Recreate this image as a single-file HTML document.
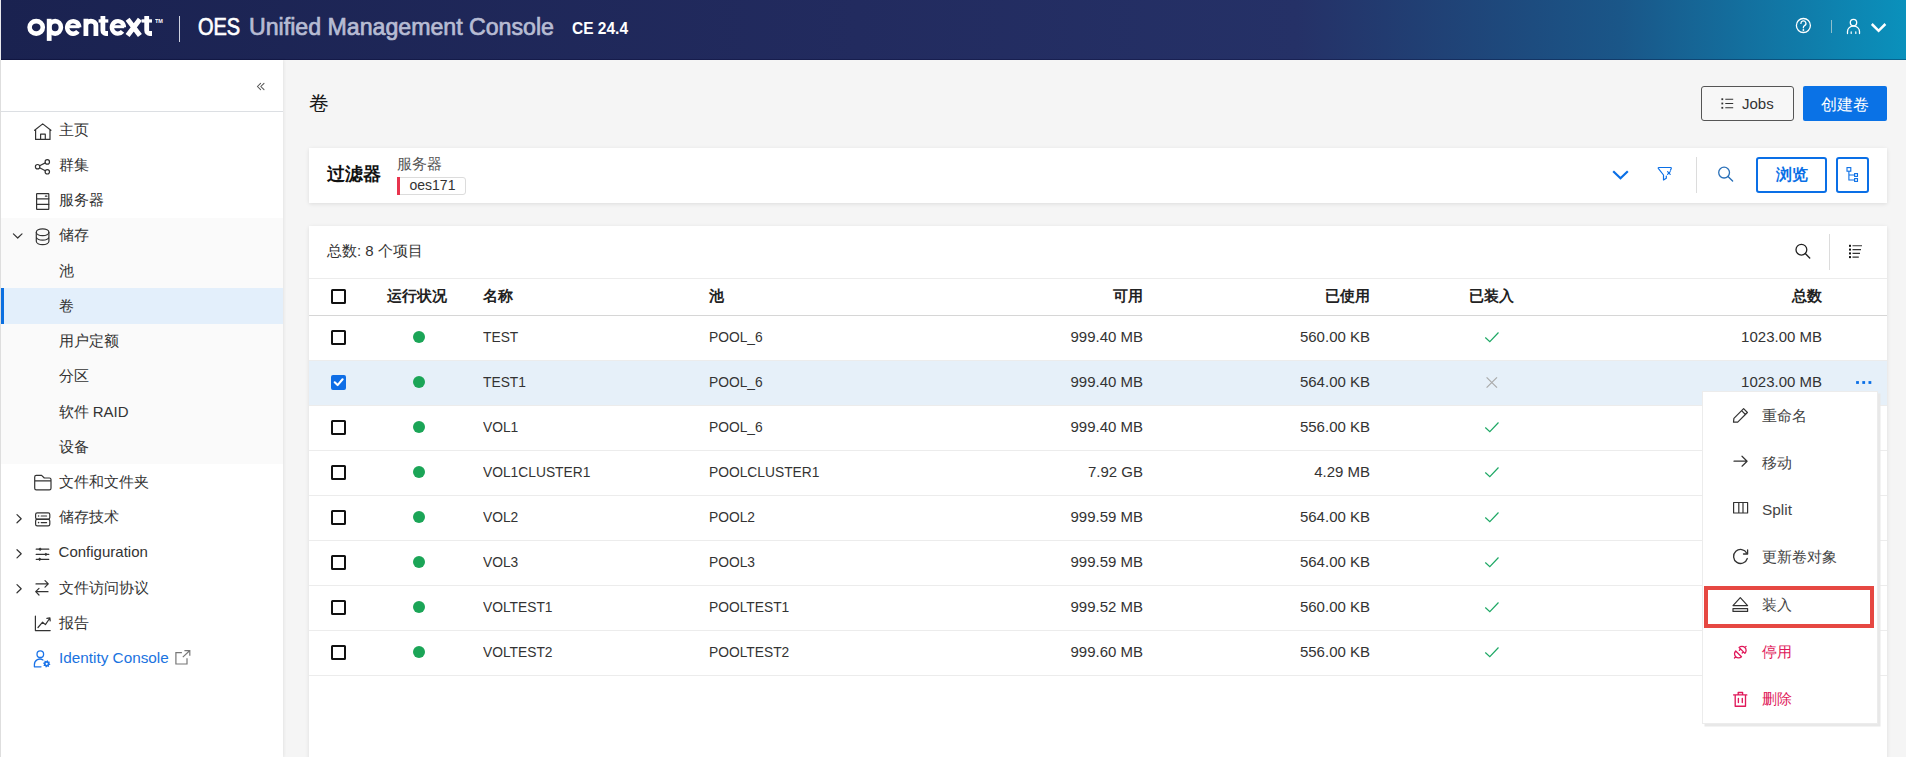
<!DOCTYPE html><html><head><meta charset="utf-8"><style>
*{box-sizing:border-box;margin:0;padding:0}
html,body{width:1906px;height:757px;overflow:hidden}
body{position:relative;background:#f5f5f5;font-family:"Liberation Sans",sans-serif;color:#333;}
.a{position:absolute}
.t{position:absolute;white-space:nowrap;line-height:1;transform-origin:0 0}
.tr{position:absolute;white-space:nowrap;line-height:1;text-align:right;transform-origin:100% 0}
svg.ov{position:absolute;left:0;top:0;width:1906px;height:757px;overflow:visible}
#hdr{left:0;top:0;width:1906px;height:60px;background:linear-gradient(90deg,#1a2250 0%,#222b5f 45%,#253167 68%,#1a5688 85%,#0a91bc 100%)}
#hdrb{left:0;top:59px;width:1906px;height:1px;background:rgba(0,0,40,.3)}
.nav{position:absolute;left:58.6px;font-size:15px;color:#333;line-height:1;white-space:nowrap}
.card{position:absolute;background:#fff;box-shadow:0 1px 4px rgba(0,0,0,.10)}
.cb{position:absolute;width:15px;height:15px;border:2px solid #111;border-radius:1.5px;left:331px}
.dot{position:absolute;width:12px;height:12px;border-radius:50%;background:#1ba557;left:413px}
.c{position:absolute;font-size:15px;color:#333;line-height:1;white-space:nowrap;transform-origin:0 0}
.cr{position:absolute;font-size:15px;color:#333;line-height:1;white-space:nowrap;text-align:right;width:200px}
.hd{position:absolute;font-size:15px;font-weight:bold;color:#222;line-height:1;white-space:nowrap}
.ln{position:absolute;left:309px;width:1578px;height:1px;background:#ececec}
.mi{position:absolute;left:1762px;font-size:15.4px;color:#444;line-height:1;white-space:nowrap}
</style></head><body>
<div id="hdr" class="a"></div><div id="hdrb" class="a"></div>
<div class="a" style="left:0;top:0;width:1px;height:60px;background:#e9e9ee"></div>
<svg class="ov" viewBox="0 0 1906 757" style="z-index:2"><g fill="none" stroke="#fff" stroke-width="4.6">
<ellipse cx="36.2" cy="27.35" rx="6.6" ry="6.25"/>
<path d="M49.2,18.8 V40.9" stroke-width="4.8"/>
<ellipse cx="55.1" cy="27.35" rx="5.8" ry="6.25"/>
<path d="M66.5,26.7 H79.5" stroke-width="3"/>
<path d="M79.25,27.35 A6.05,6.25 0 1 0 77.9,31.4" stroke-width="4.4"/>
<path d="M85.9,35.9 V18.8 M85.9,25.2 A5,4.1 0 0 1 95.9,25.2 V35.9" stroke-width="4.8"/>
<path d="M102.9,16 V30.5 A3,3 0 0 0 105.9,33.5 H108" stroke-width="4.8"/>
<path d="M98.6,20.95 H108.3" stroke-width="3.3"/>
<path d="M111.7,26.7 H124.2" stroke-width="3"/>
<path d="M123.9,27.35 A6.0,6.25 0 1 0 122.5,31.4" stroke-width="4.4"/>
<path d="M127.6,19.2 L139.9,35.6 M139.9,19.2 L127.6,35.6" stroke-width="5"/>
<path d="M146.7,16 V30.5 A3,3 0 0 0 149.7,33.5 H152" stroke-width="4.8"/>
<path d="M141.6,20.95 H152" stroke-width="3.3"/>
</g></svg>
<div class="t" style="left:155px;top:18.6px;font-size:5px;font-weight:bold;color:#fff;transform:scaleX(1.1)">TM</div>
<div class="a" style="left:179px;top:16px;width:1px;height:26px;background:#cfd2e0"></div>
<div class="t" style="left:198px;top:16px;font-size:23.5px;color:#fff;transform:scaleX(0.85);-webkit-text-stroke:0.7px #fff">OES</div>
<div class="t" style="left:249.3px;top:16px;font-size:23.5px;color:#b7bcd3;transform:scaleX(0.985);-webkit-text-stroke:0.7px #b7bcd3">Unified Management Console</div>
<div class="t" style="left:572px;top:19.5px;font-size:16.5px;font-weight:bold;color:#fff;transform:scaleX(0.94)">CE 24.4</div>
<div class="a" style="left:1831px;top:20px;width:1px;height:13px;background:#8fbfcc"></div>
<div class="a" style="left:0;top:60px;width:283px;height:697px;background:#fff;border-left:1px solid #dedede;box-shadow:1px 0 3px rgba(0,0,0,.07)"></div>
<div class="a" style="left:1px;top:111px;width:282px;height:1px;background:#dcdfe3"></div>
<div class="a" style="left:1px;top:218px;width:282px;height:246px;background:#fafafa"></div>
<div class="a" style="left:1px;top:288px;width:282px;height:36px;background:#e3effb"></div>
<div class="a" style="left:1px;top:288px;width:3px;height:36px;background:#0b6fe0"></div>
<div class="nav" style="top:121.80px">主页</div>
<div class="nav" style="top:157.02px">群集</div>
<div class="nav" style="top:192.24px">服务器</div>
<div class="nav" style="top:227.46px">储存</div>
<div class="nav" style="top:262.68px">池</div>
<div class="nav" style="top:297.90px">卷</div>
<div class="nav" style="top:333.12px">用户定额</div>
<div class="nav" style="top:368.34px">分区</div>
<div class="nav" style="top:403.56px">软件 RAID</div>
<div class="nav" style="top:438.78px">设备</div>
<div class="nav" style="top:474.00px">文件和文件夹</div>
<div class="nav" style="top:509.22px">储存技术</div>
<div class="nav" style="top:544.44px">Configuration</div>
<div class="nav" style="top:579.66px">文件访问协议</div>
<div class="nav" style="top:614.88px">报告</div>
<div class="nav" style="top:650.10px;color:#1a73e0;transform:scaleX(1.02);transform-origin:0 0">Identity Console</div>
<div class="t" style="left:309px;top:93px;font-size:20px;color:#1a1a1a">卷</div>
<div class="a" style="left:1701px;top:86px;width:93px;height:35px;border:1px solid #555;border-radius:3px;background:#f7f7f7"></div>
<div class="t" style="left:1742px;top:96px;font-size:15px;color:#333">Jobs</div>
<div class="a" style="left:1803px;top:86px;width:84px;height:35px;border-radius:2px;background:#0a72e6"></div>
<div class="t" style="left:1821px;top:97px;font-size:15.5px;color:#fff">创建卷</div>
<div class="card" style="left:309px;top:148px;width:1578px;height:55px"></div>
<div class="t" style="left:326.5px;top:166px;font-size:17.5px;font-weight:bold;color:#111">过滤器</div>
<div class="t" style="left:397px;top:156px;font-size:15px;color:#555">服务器</div>
<div class="a" style="left:397px;top:177px;width:69px;height:18px;border:1px solid #dcdcdc;border-radius:3px"></div><div class="a" style="left:397px;top:177px;width:3px;height:18px;background:#e8344e"></div>
<div class="t" style="left:409.5px;top:178.3px;font-size:14px;color:#333">oes171</div>
<div class="a" style="left:1696px;top:157px;width:1px;height:36px;background:#dcdcdc"></div>
<div class="a" style="left:1756px;top:157px;width:71px;height:36px;border:2px solid #0a6fe6;border-radius:3px"></div>
<div class="t" style="left:1775.5px;top:167px;font-size:15.5px;font-weight:bold;color:#0a6fe6">浏览</div>
<div class="a" style="left:1836px;top:157px;width:33px;height:36px;border:2px solid #0a6fe6;border-radius:3px"></div>
<div class="card" style="left:309px;top:226px;width:1578px;height:560px"></div>
<div class="t" style="left:327px;top:243px;font-size:15px;color:#333">总数: 8 个项目</div>
<div class="a" style="left:1829px;top:234px;width:1px;height:36px;background:#dcdcdc"></div>
<div class="ln" style="top:278px"></div>
<div class="ln" style="top:315px;height:1px;background:#d6d6d6"></div>
<div class="cb" style="top:289px"></div>
<div class="hd" style="left:387px;top:288.2px">运行状况</div>
<div class="hd" style="left:483px;top:288.2px">名称</div>
<div class="hd" style="left:709px;top:288.2px">池</div>
<div class="hd" style="left:943px;top:288.2px;width:200px;text-align:right">可用</div>
<div class="hd" style="left:1170px;top:288.2px;width:200px;text-align:right">已使用</div>
<div class="hd" style="left:1469px;top:288.2px">已装入</div>
<div class="hd" style="left:1622px;top:288.2px;width:200px;text-align:right">总数</div>
<div class="cb" style="top:330px"></div>
<div class="dot" style="top:330.9px"></div>
<div class="c" style="left:483px;top:329.4px;transform:scaleX(0.92)">TEST</div>
<div class="c" style="left:709px;top:329.4px;transform:scaleX(0.92)">POOL_6</div>
<div class="cr" style="left:943px;top:329.4px">999.40 MB</div>
<div class="cr" style="left:1170px;top:329.4px">560.00 KB</div>
<div class="cr" style="left:1622px;top:329.4px">1023.00 MB</div>
<div class="a" style="left:309px;top:360px;width:1578px;height:45px;background:#e6f0f9"></div>
<div class="ln" style="top:360px"></div>
<div class="cb" style="top:375px;background:#0f6ee6;border-color:#0f6ee6;border-radius:2px"></div>
<div class="dot" style="top:375.9px"></div>
<div class="c" style="left:483px;top:374.4px;transform:scaleX(0.92)">TEST1</div>
<div class="c" style="left:709px;top:374.4px;transform:scaleX(0.92)">POOL_6</div>
<div class="cr" style="left:943px;top:374.4px">999.40 MB</div>
<div class="cr" style="left:1170px;top:374.4px">564.00 KB</div>
<div class="cr" style="left:1622px;top:374.4px">1023.00 MB</div>
<div class="ln" style="top:405px"></div>
<div class="cb" style="top:420px"></div>
<div class="dot" style="top:420.9px"></div>
<div class="c" style="left:483px;top:419.4px;transform:scaleX(0.92)">VOL1</div>
<div class="c" style="left:709px;top:419.4px;transform:scaleX(0.92)">POOL_6</div>
<div class="cr" style="left:943px;top:419.4px">999.40 MB</div>
<div class="cr" style="left:1170px;top:419.4px">556.00 KB</div>
<div class="ln" style="top:450px"></div>
<div class="cb" style="top:465px"></div>
<div class="dot" style="top:465.9px"></div>
<div class="c" style="left:483px;top:464.4px;transform:scaleX(0.92)">VOL1CLUSTER1</div>
<div class="c" style="left:709px;top:464.4px;transform:scaleX(0.92)">POOLCLUSTER1</div>
<div class="cr" style="left:943px;top:464.4px">7.92 GB</div>
<div class="cr" style="left:1170px;top:464.4px">4.29 MB</div>
<div class="ln" style="top:495px"></div>
<div class="cb" style="top:510px"></div>
<div class="dot" style="top:510.9px"></div>
<div class="c" style="left:483px;top:509.4px;transform:scaleX(0.92)">VOL2</div>
<div class="c" style="left:709px;top:509.4px;transform:scaleX(0.92)">POOL2</div>
<div class="cr" style="left:943px;top:509.4px">999.59 MB</div>
<div class="cr" style="left:1170px;top:509.4px">564.00 KB</div>
<div class="ln" style="top:540px"></div>
<div class="cb" style="top:555px"></div>
<div class="dot" style="top:555.9px"></div>
<div class="c" style="left:483px;top:554.4px;transform:scaleX(0.92)">VOL3</div>
<div class="c" style="left:709px;top:554.4px;transform:scaleX(0.92)">POOL3</div>
<div class="cr" style="left:943px;top:554.4px">999.59 MB</div>
<div class="cr" style="left:1170px;top:554.4px">564.00 KB</div>
<div class="ln" style="top:585px"></div>
<div class="cb" style="top:600px"></div>
<div class="dot" style="top:600.9px"></div>
<div class="c" style="left:483px;top:599.4px;transform:scaleX(0.92)">VOLTEST1</div>
<div class="c" style="left:709px;top:599.4px;transform:scaleX(0.92)">POOLTEST1</div>
<div class="cr" style="left:943px;top:599.4px">999.52 MB</div>
<div class="cr" style="left:1170px;top:599.4px">560.00 KB</div>
<div class="ln" style="top:630px"></div>
<div class="cb" style="top:645px"></div>
<div class="dot" style="top:645.9px"></div>
<div class="c" style="left:483px;top:644.4px;transform:scaleX(0.92)">VOLTEST2</div>
<div class="c" style="left:709px;top:644.4px;transform:scaleX(0.92)">POOLTEST2</div>
<div class="cr" style="left:943px;top:644.4px">999.60 MB</div>
<div class="cr" style="left:1170px;top:644.4px">556.00 KB</div>
<div class="ln" style="top:675px"></div>
<div class="a" style="left:1702px;top:391px;width:176px;height:333px;background:#fff;border:1px solid #ececec;box-shadow:2.5px 2.5px 0 #e8e8e8"></div>
<div class="mi" style="top:407.6px;color:#444">重命名</div>
<div class="mi" style="top:454.9px;color:#444">移动</div>
<div class="mi" style="top:502.1px;color:#444">Split</div>
<div class="mi" style="top:549.4px;color:#444">更新卷对象</div>
<div class="mi" style="top:596.6px;color:#444">装入</div>
<div class="mi" style="top:643.9px;color:#e0195a">停用</div>
<div class="mi" style="top:691.1px;color:#e0195a">删除</div>
<div class="a" style="left:1704px;top:586px;width:170px;height:42px;border:4px solid #e64842"></div>
<svg class="ov" viewBox="0 0 1906 757" style="z-index:5"><circle cx="1803.4" cy="25.5" r="7" fill="none" stroke="#fff" stroke-width="1.3" stroke-linecap="round" stroke-linejoin="round"/>
<path d="M1800.9,23.4 a2.5,2.5 0 1 1 3.7,2.2 c-0.8,0.45 -1.2,0.9 -1.2,1.7 v0.5" fill="none" stroke="#fff" stroke-width="1.3" stroke-linecap="round" stroke-linejoin="round"/>
<circle cx="1803.4" cy="30" r="0.9" fill="#fff"/>
<circle cx="1853.5" cy="22.6" r="3.2" fill="none" stroke="#fff" stroke-width="1.3" stroke-linecap="round" stroke-linejoin="round"/>
<path d="M1847.5,33.5 V31.5 a6,5.5 0 0 1 12,0 V33.5" fill="none" stroke="#fff" stroke-width="1.3" stroke-linecap="round" stroke-linejoin="round"/>
<path d="M1851.2,31.8 V33.5 M1855.8,31.8 V33.5" fill="none" stroke="#fff" stroke-width="1.2" stroke-linecap="round" stroke-linejoin="round"/>
<path d="M1871.8,24 L1878.6,30.8 L1885.4,24" fill="none" stroke="#fff" stroke-width="2.5"/>
<path d="M260.6,83.3 L257.4,86.5 L260.6,89.7 M264,83.3 L260.8,86.5 L264,89.7" fill="none" stroke="#555" stroke-width="1.05" stroke-linecap="round" stroke-linejoin="round"/>
<path d="M34.6,130.3 L42.7,123.9 L50.9,130.3 M35.6,130 V139.4 H50 V130 M40.6,139.4 V134.2 H45.3 V139.4" fill="none" stroke="#333" stroke-width="1.2" stroke-linecap="round" stroke-linejoin="round"/>
<g fill="none" stroke="#333" stroke-width="1.2" stroke-linecap="round" stroke-linejoin="round"><circle cx="47.3" cy="161.9" r="2.2"/><circle cx="37.6" cy="166.7" r="2.2"/><circle cx="47.3" cy="171.8" r="2.2"/><path d="M39.6,165.7 L45.3,162.9 M39.6,167.7 L45.3,170.8"/></g>
<g fill="none" stroke="#333" stroke-width="1.2" stroke-linecap="round" stroke-linejoin="round"><rect x="36.6" y="193.6" width="12.2" height="15.8" rx="0.5"/><path d="M36.6,198.8 H48.8 M36.6,204.3 H48.8 M45.4,196.2 H46.9"/></g>
<path d="M13.4,233.9 L17.7,238 L22,233.9" fill="none" stroke="#333" stroke-width="1.2" stroke-linecap="round" stroke-linejoin="round"/>
<g fill="none" stroke="#333" stroke-width="1.2" stroke-linecap="round" stroke-linejoin="round"><ellipse cx="42.6" cy="232.3" rx="6.3" ry="3.4"/><path d="M36.3,232.3 V241.3 A6.3,3.4 0 0 0 48.9,241.3 V232.3 M36.3,236.8 A6.3,3.4 0 0 0 48.9,236.8"/></g>
<g fill="none" stroke="#333" stroke-width="1.2" stroke-linecap="round" stroke-linejoin="round"><path d="M34.7,488.3 V477 a1.6,1.6 0 0 1 1.6,-1.6 H41.6 L44.3,478 H49.4 a1.6,1.6 0 0 1 1.6,1.6 V488.3 a1.6,1.6 0 0 1 -1.6,1.6 H36.3 a1.6,1.6 0 0 1 -1.6,-1.6 Z M34.7,480.8 H51"/></g>
<g fill="none" stroke="#333" stroke-width="1.2" stroke-linecap="round" stroke-linejoin="round"><rect x="35.6" y="512.8" width="14.2" height="6.4" rx="1.6"/><rect x="35.6" y="519.4" width="14.2" height="6.4" rx="1.6"/><path d="M41.2,516 H46.6 M41.2,522.6 H46.6"/></g>
<circle cx="38.6" cy="516" r="0.8" fill="#333"/><circle cx="38.6" cy="522.6" r="0.8" fill="#333"/>
<path d="M17,514.6 L21.2,518.7 L17,522.8000000000001" fill="none" stroke="#333" stroke-width="1.2" stroke-linecap="round" stroke-linejoin="round"/>
<path d="M17,549.7 L21.2,553.8000000000001 L17,557.9000000000001" fill="none" stroke="#333" stroke-width="1.2" stroke-linecap="round" stroke-linejoin="round"/>
<path d="M17,584.6 L21.2,588.7 L17,592.8000000000001" fill="none" stroke="#333" stroke-width="1.2" stroke-linecap="round" stroke-linejoin="round"/>
<path d="M36.2,549.2 H48.8 M36.2,554.4 H48.8 M36.2,559.3 H48.8" fill="none" stroke="#333" stroke-width="1.2" stroke-linecap="round" stroke-linejoin="round"/>
<g fill="#333"><path d="M40.1,547.5 L41.8,549.2 L40.1,550.9 L38.4,549.2Z M45.9,552.7 L47.6,554.4 L45.9,556.1 L44.2,554.4Z M39.7,557.6 L41.4,559.3 L39.7,561 L38,559.3Z"/></g>
<path d="M36,583.9 H48 M45,580.6 L48.3,583.9 L45,587.2 M48,591.7 H36 M39,588.4 L35.7,591.7 L39,595" fill="none" stroke="#333" stroke-width="1.2" stroke-linecap="round" stroke-linejoin="round"/>
<path d="M35.4,616.2 V630.6 H50.2 M38,627.5 L42.6,622.2 L45.4,624.6 L49.6,618.5 M46.9,618.4 L49.9,617.9 L50.2,620.9" fill="none" stroke="#333" stroke-width="1.2" stroke-linecap="round" stroke-linejoin="round"/>
<g fill="none" stroke="#1a73e8" stroke-width="1.3" stroke-linecap="round" stroke-linejoin="round"><circle cx="40.3" cy="654.2" r="3.3"/><path d="M34.4,666.8 V664.5 a5.5,5.5 0 0 1 8.6,-4.5 M34.4,666.8 H41"/></g>
<path d="M50.53,664.56 L48.94,665.30 L48.87,667.04 L47.23,666.45 L45.94,667.63 L45.20,666.04 L43.46,665.97 L44.05,664.33 L42.87,663.04 L44.46,662.30 L44.53,660.56 L46.17,661.15 L47.46,659.97 L48.20,661.56 L49.94,661.63 L49.35,663.27 Z" fill="#1a73e8"/><circle cx="46.7" cy="663.8" r="1.1" fill="#fff"/>
<path d="M181.9,652.7 H175.9 V664 H187 V658.3 M182.8,657.1 L189.6,650.8 M184.4,650.6 H189.8 V655.8" fill="none" stroke="#777" stroke-width="1.2"/>
<g fill="#333"><rect x="1721.4" y="98.3" width="1.8" height="1.8"/><rect x="1721.4" y="102.6" width="1.8" height="1.8"/><rect x="1721.4" y="106.9" width="1.8" height="1.8"/></g>
<path d="M1725.3,99.2 H1733.2 M1725.3,103.5 H1733.2 M1725.3,107.8 H1733.2" fill="none" stroke="#333" stroke-width="1.1"/>
<path d="M1614,172 L1620.5,178.2 L1627,172" fill="none" stroke="#0a6fe6" stroke-width="2.2" stroke-linecap="square"/>
<path d="M1670.5,170.2 L1671.3,168.3 a0.6,0.6 0 0 0 -0.5,-0.8 H1658.8 a0.6,0.6 0 0 0 -0.5,0.9 L1663.5,175 V180 L1666.3,178.2 V176" fill="none" stroke="#0a6fe6" stroke-width="1.2" stroke-linecap="round" stroke-linejoin="round"/>
<path d="M1667.6,171.7 L1670.2,174.3 M1670.2,171.7 L1667.6,174.3" fill="none" stroke="#0a6fe6" stroke-width="1.2" stroke-linecap="round" stroke-linejoin="round"/>
<circle cx="1724.1" cy="172.6" r="5.4" fill="none" stroke="#2a70b8" stroke-width="1.3"/><path d="M1728,176.6 L1732.6,181" fill="none" stroke="#2a70b8" stroke-width="1.4" stroke-linecap="round"/>
<g fill="none" stroke="#0a6fe6" stroke-width="1.1"><rect x="1847" y="167.6" width="3.8" height="3.6"/><rect x="1854.6" y="173.6" width="2.9" height="2.8"/><rect x="1854.6" y="178.6" width="2.9" height="2.8"/><path d="M1848.9,171.2 V180 H1854.6 M1848.9,175 H1854.6"/></g>
<circle cx="1801.4" cy="249.7" r="5.4" fill="none" stroke="#222" stroke-width="1.3"/><path d="M1805.3,253.6 L1809.7,258" fill="none" stroke="#222" stroke-width="1.4" stroke-linecap="round"/>
<g fill="#111"><rect x="1849" y="244.8" width="2" height="2"/><rect x="1849" y="248.6" width="2" height="2"/><rect x="1849" y="252.4" width="2" height="2"/><rect x="1849" y="256.1" width="2" height="2"/></g>
<path d="M1852.5,245.8 H1862 M1852.5,249.6 H1861 M1852.5,253.4 H1860 M1852.5,257.1 H1858.8" fill="none" stroke="#333" stroke-width="1.1"/>
<path d="M1485.3,337.5 L1489.8,341.7 L1498.5,332.5" fill="none" stroke="#1ea865" stroke-width="1.2"/>
<path d="M1486.6,377.3 L1497,387.7 M1497,377.3 L1486.6,387.7" fill="none" stroke="#aaa" stroke-width="1.2"/>
<path d="M1485.3,427.5 L1489.8,431.7 L1498.5,422.5" fill="none" stroke="#1ea865" stroke-width="1.2"/>
<path d="M1485.3,472.5 L1489.8,476.7 L1498.5,467.5" fill="none" stroke="#1ea865" stroke-width="1.2"/>
<path d="M1485.3,517.5 L1489.8,521.7 L1498.5,512.5" fill="none" stroke="#1ea865" stroke-width="1.2"/>
<path d="M1485.3,562.5 L1489.8,566.7 L1498.5,557.5" fill="none" stroke="#1ea865" stroke-width="1.2"/>
<path d="M1485.3,607.5 L1489.8,611.7 L1498.5,602.5" fill="none" stroke="#1ea865" stroke-width="1.2"/>
<path d="M1485.3,652.5 L1489.8,656.7 L1498.5,647.5" fill="none" stroke="#1ea865" stroke-width="1.2"/>
<path d="M334.7,382.3 L337.6,385.1 L342.6,379.3" fill="none" stroke="#fff" stroke-width="2.1" stroke-linecap="round" stroke-linejoin="round"/>
<g fill="#0a6fe6"><rect x="1856.1" y="381.1" width="2.8" height="2.8"/><rect x="1862.3" y="381.1" width="2.8" height="2.8"/><rect x="1868.5" y="381.1" width="2.8" height="2.8"/></g><path d="M1733.5,422.2 L1733.9,418.4 L1743.6,408.7 L1747.4,412.5 L1737.7,422.2 Z M1741.6,410.7 L1745.4,414.5" fill="none" stroke="#333" stroke-width="1.2" stroke-linecap="round" stroke-linejoin="round"/>
<path d="M1734,461.2 H1747 M1742,456.2 L1747.1,461.2 L1742,466.2" fill="none" stroke="#333" stroke-width="1.2" stroke-linecap="round" stroke-linejoin="round"/>
<path d="M1733.6,502.5 H1747.6 V513 H1733.6 Z M1738.8,502.5 V513 M1743,502.5 V513" fill="none" stroke="#333" stroke-width="1.2" stroke-linecap="round" stroke-linejoin="round"/>
<path d="M1746.8,553.2 A7,7 0 1 0 1747.3,558.5" fill="none" stroke="#333" stroke-width="1.3" stroke-linecap="round" stroke-linejoin="round"/><path d="M1747.6,549.8 V554 H1743.5" fill="none" stroke="#333" stroke-width="1.3" stroke-linecap="round" stroke-linejoin="round"/>
<path d="M1740.3,597.6 L1747.6,605.6 H1733 Z M1733,608.6 H1747.6 V611.4 H1733 Z" fill="none" stroke="#333" stroke-width="1.2" stroke-linecap="round" stroke-linejoin="round"/>
<g transform="translate(1740.3,652.15) rotate(-45)" fill="none" stroke="#e0195a" stroke-width="1.3" stroke-linecap="round" stroke-linejoin="round"><path d="M2.4,-4.1 A4.1,4.1 0 0 1 2.4,4.1 Z M6.5,0 H8.2 M2.4,-2 H0.7 M2.4,2 H0.7"/><path d="M-2.4,-4.1 A4.1,4.1 0 0 0 -2.4,4.1 Z M-6.5,0 H-8.2"/></g>
<g fill="none" stroke="#e0195a" stroke-width="1.35" stroke-linecap="round" stroke-linejoin="round"><path d="M1733.6,694.9 H1746.8 M1738.2,694.9 V692.5 H1742.6 V694.9 M1735.2,694.9 V706.2 H1745.5 V694.9 M1738.4,698.3 V702.6 M1742.3,698.3 V702.6"/></g></svg>
</body></html>
